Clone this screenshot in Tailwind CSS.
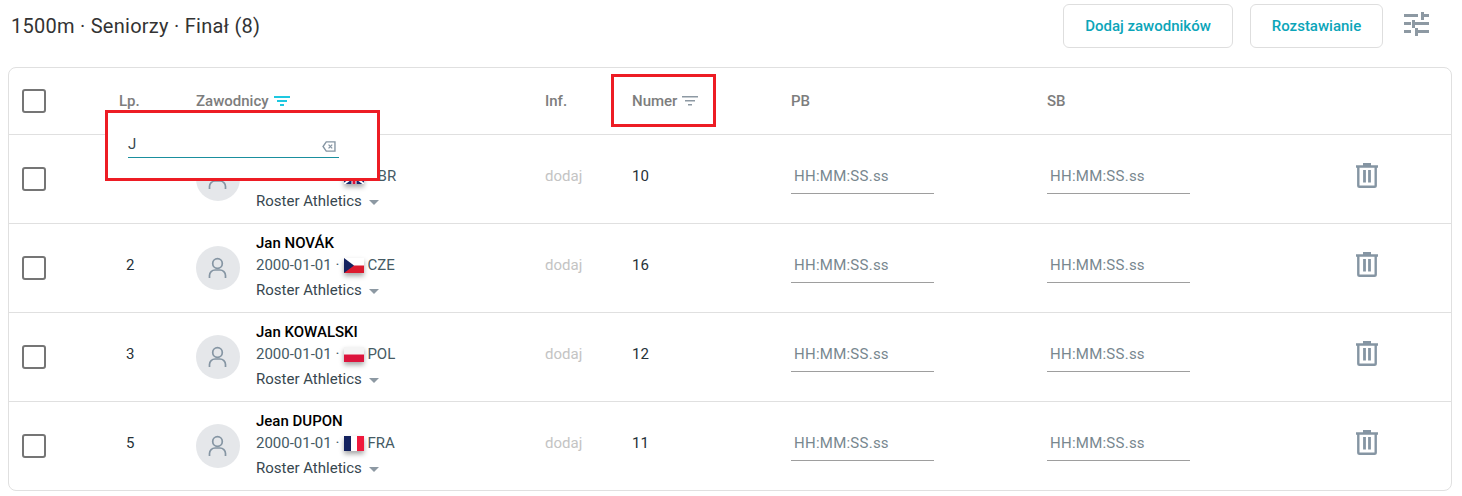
<!DOCTYPE html>
<html lang="pl">
<head>
  <meta charset="UTF-8">
  <title>1500m Seniorzy</title>
  <script src="https://cdn.jsdelivr.net/npm/@tailwindcss/browser@4"></script>
</head>
<body class="bg-white font-['Roboto',sans-serif] text-[15px] text-[#263238] w-[1462px] h-[496px] overflow-hidden relative">

  <!-- toolbar -->
  <div class="h-[67px] pl-[11px] pt-[4px] flex items-start">
    <h1 class="text-[20px] tracking-[0.26px] leading-[44px] text-[#333] flex-1">1500m · Seniorzy · Finał (8)</h1>
    <button class="h-[44px] w-[170px] border border-[#dedede] rounded-[6px] font-medium text-[#0ba5b9]">Dodaj zawodników</button>
    <button class="h-[44px] w-[133px] ml-[17px] border border-[#dedede] rounded-[6px] font-medium text-[#0ba5b9]">Rozstawianie</button>
    <svg class="ml-[21px] mr-[33px] mt-[8px]" width="25" height="24" viewBox="0 0 25 24" fill="#8d99a3">
      <rect x="0" y="2" width="14" height="3"/><rect x="17" y="0" width="3" height="8"/><rect x="17" y="2" width="8" height="3"/>
      <rect x="0" y="10" width="7" height="3"/><rect x="8" y="8" width="3" height="8"/><rect x="8" y="10" width="17" height="3"/>
      <rect x="0" y="18" width="7" height="3"/><rect x="11" y="16" width="3" height="8"/><rect x="11" y="18" width="14" height="3"/>
    </svg>
  </div>

  <!-- table -->
  <div class="mx-[8px] w-[1444px] h-[424px] border border-[#e0e0e0] rounded-[8px]">
    <div class="grid grid-cols-[97px_77px_349px_87px_159px_256px_308px_1fr] items-center pl-[13px] h-[67px] border-b border-[#e0e0e0] font-medium text-[#7d7d7d]">
      <span class="w-[24px] h-[24px] border-2 border-[#757575] rounded-[3px]"></span>
      <span>Lp.</span>
      <span class="flex items-center gap-[5px]">Zawodnicy
        <svg width="16" height="12" viewBox="0 0 16 12" fill="#1ec8e0"><rect y="1" width="16" height="2"/><rect x="3" y="5" width="10" height="2"/><rect x="6" y="9" width="4" height="2"/></svg>
      </span>
      <span>Inf.</span>
      <span class="flex items-center gap-[5px]">Numer
        <svg width="16" height="12" viewBox="0 0 16 12" fill="#8d99a3"><rect y="1" width="16" height="1.5"/><rect x="3" y="5" width="10" height="1.5"/><rect x="6" y="9" width="4" height="1.5"/></svg>
      </span>
      <span>PB</span>
      <span>SB</span>
      <span></span>
    </div>

    <!-- row 1 -->
    <div class="grid grid-cols-[97px_77px_349px_87px_159px_256px_308px_1fr] items-center pl-[13px] h-[89px] border-b border-[#e0e0e0]">
      <span class="w-[24px] h-[24px] border-2 border-[#757575] rounded-[3px]"></span>
      <span class="pl-[7px] mb-[6px]">1</span>
      <div class="flex items-center gap-[16px]">
        <span class="w-[44px] h-[44px] rounded-full bg-[#e5e7ea] flex items-center justify-center">
          <svg width="24" height="24" viewBox="0 0 24 24" fill="none" stroke="#8595a3" stroke-width="1.7"><circle cx="11.5" cy="7.5" r="4.800"/><path d="M3.500 22v-2.500c0-3 2.500-5.500 5.500-5.500h5c3 0 5.500 2.500 5.500 5.500V22"/></svg>
        </span>
        <div class="leading-[20px]">
          <div class="font-medium text-black h-[24px] pt-[2px]">John SMITH</div>
          <div class="flex items-center h-[20px] text-[#455a64]">2000-01-01 ·
            <svg class="ml-[5px] mr-[3px] shadow-[0_3px_5px_rgba(0,0,0,0.35)]" width="20" height="15" viewBox="0 0 20 15"><rect width="20" height="15" fill="#1a2a6c"/><path d="M0 0l20 15M20 0L0 15" stroke="#fff" stroke-width="2"/><path d="M10 0v15M0 7.500h20" stroke="#fff" stroke-width="5"/><path d="M10 0v15M0 7.500h20" stroke="#d8143a" stroke-width="3"/></svg>GBR</div>
          <div class="flex items-center h-[30px] text-[#37474f]">Roster Athletics<span class="ml-[7px] mt-[2px] w-0 h-0 border-x-[5px] border-x-transparent border-t-[5px] border-t-[#8d99a3]"></span></div>
        </div>
      </div>
      <span class="text-[#c4c4c4] mb-[6px]">dodaj</span>
      <span class="mb-[6px]">10</span>
      <span class="w-[143px] h-[30px] border-b border-[#9e9e9e] pl-[3px] leading-[24px] tracking-[0.25px] text-[#78878f]">HH:MM:SS.ss</span>
      <span class="w-[143px] h-[30px] border-b border-[#9e9e9e] pl-[3px] leading-[24px] tracking-[0.25px] text-[#78878f]">HH:MM:SS.ss</span>
      <svg class="mb-[6px]" width="24" height="26" viewBox="0 0 24 26" fill="none" stroke="#8595a3"><path d="M1 3.500h22M8 1.200h8" stroke-width="2.400"/><path d="M3.300 4v18.500c0 .8.500 1.300 1.300 1.300h14.800c.8 0 1.300-.5 1.300-1.300V4" stroke-width="2.400"/><path d="M9.500 7v12.500M14.500 7v12.500" stroke-width="2.800"/></svg>
    </div>

    <!-- row 2 -->
    <div class="grid grid-cols-[97px_77px_349px_87px_159px_256px_308px_1fr] items-center pl-[13px] h-[89px] border-b border-[#e0e0e0]">
      <span class="w-[24px] h-[24px] border-2 border-[#757575] rounded-[3px]"></span>
      <span class="pl-[7px] mb-[6px]">2</span>
      <div class="flex items-center gap-[16px]">
        <span class="w-[44px] h-[44px] rounded-full bg-[#e5e7ea] flex items-center justify-center">
          <svg width="24" height="24" viewBox="0 0 24 24" fill="none" stroke="#8595a3" stroke-width="1.7"><circle cx="11.5" cy="7.5" r="4.800"/><path d="M3.500 22v-2.500c0-3 2.500-5.500 5.500-5.500h5c3 0 5.500 2.500 5.500 5.500V22"/></svg>
        </span>
        <div class="leading-[20px]">
          <div class="font-medium text-black h-[24px] pt-[2px]">Jan NOVÁK</div>
          <div class="flex items-center h-[20px] text-[#455a64]">2000-01-01 ·
            <svg class="ml-[5px] mr-[3px] shadow-[0_3px_5px_rgba(0,0,0,0.35)]" width="20" height="15" viewBox="0 0 20 15"><rect width="20" height="7.500" fill="#fff"/><rect y="7.500" width="20" height="7.500" fill="#dc1a2e"/><path d="M0 0l10 7.500L0 15z" fill="#14225f"/></svg>CZE</div>
          <div class="flex items-center h-[30px] text-[#37474f]">Roster Athletics<span class="ml-[7px] mt-[2px] w-0 h-0 border-x-[5px] border-x-transparent border-t-[5px] border-t-[#8d99a3]"></span></div>
        </div>
      </div>
      <span class="text-[#c4c4c4] mb-[6px]">dodaj</span>
      <span class="mb-[6px]">16</span>
      <span class="w-[143px] h-[30px] border-b border-[#9e9e9e] pl-[3px] leading-[24px] tracking-[0.25px] text-[#78878f]">HH:MM:SS.ss</span>
      <span class="w-[143px] h-[30px] border-b border-[#9e9e9e] pl-[3px] leading-[24px] tracking-[0.25px] text-[#78878f]">HH:MM:SS.ss</span>
      <svg class="mb-[6px]" width="24" height="26" viewBox="0 0 24 26" fill="none" stroke="#8595a3"><path d="M1 3.500h22M8 1.200h8" stroke-width="2.400"/><path d="M3.300 4v18.500c0 .8.500 1.300 1.300 1.300h14.800c.8 0 1.300-.5 1.300-1.300V4" stroke-width="2.400"/><path d="M9.500 7v12.500M14.500 7v12.500" stroke-width="2.800"/></svg>
    </div>

    <!-- row 3 -->
    <div class="grid grid-cols-[97px_77px_349px_87px_159px_256px_308px_1fr] items-center pl-[13px] h-[89px] border-b border-[#e0e0e0]">
      <span class="w-[24px] h-[24px] border-2 border-[#757575] rounded-[3px]"></span>
      <span class="pl-[7px] mb-[6px]">3</span>
      <div class="flex items-center gap-[16px]">
        <span class="w-[44px] h-[44px] rounded-full bg-[#e5e7ea] flex items-center justify-center">
          <svg width="24" height="24" viewBox="0 0 24 24" fill="none" stroke="#8595a3" stroke-width="1.7"><circle cx="11.5" cy="7.5" r="4.800"/><path d="M3.500 22v-2.500c0-3 2.500-5.500 5.500-5.500h5c3 0 5.500 2.500 5.500 5.500V22"/></svg>
        </span>
        <div class="leading-[20px]">
          <div class="font-medium text-black h-[24px] pt-[2px]">Jan KOWALSKI</div>
          <div class="flex items-center h-[20px] text-[#455a64]">2000-01-01 ·
            <svg class="ml-[5px] mr-[3px] shadow-[0_3px_5px_rgba(0,0,0,0.35)]" width="20" height="15" viewBox="0 0 20 15"><rect width="20" height="7.500" fill="#f4f4f4"/><rect y="7.500" width="20" height="7.500" fill="#dc143c"/></svg>POL</div>
          <div class="flex items-center h-[30px] text-[#37474f]">Roster Athletics<span class="ml-[7px] mt-[2px] w-0 h-0 border-x-[5px] border-x-transparent border-t-[5px] border-t-[#8d99a3]"></span></div>
        </div>
      </div>
      <span class="text-[#c4c4c4] mb-[6px]">dodaj</span>
      <span class="mb-[6px]">12</span>
      <span class="w-[143px] h-[30px] border-b border-[#9e9e9e] pl-[3px] leading-[24px] tracking-[0.25px] text-[#78878f]">HH:MM:SS.ss</span>
      <span class="w-[143px] h-[30px] border-b border-[#9e9e9e] pl-[3px] leading-[24px] tracking-[0.25px] text-[#78878f]">HH:MM:SS.ss</span>
      <svg class="mb-[6px]" width="24" height="26" viewBox="0 0 24 26" fill="none" stroke="#8595a3"><path d="M1 3.500h22M8 1.200h8" stroke-width="2.400"/><path d="M3.300 4v18.500c0 .8.500 1.300 1.300 1.300h14.800c.8 0 1.300-.5 1.300-1.300V4" stroke-width="2.400"/><path d="M9.500 7v12.500M14.500 7v12.500" stroke-width="2.800"/></svg>
    </div>

    <!-- row 4 -->
    <div class="grid grid-cols-[97px_77px_349px_87px_159px_256px_308px_1fr] items-center pl-[13px] h-[89px] border-b border-transparent">
      <span class="w-[24px] h-[24px] border-2 border-[#757575] rounded-[3px]"></span>
      <span class="pl-[7px] mb-[6px]">5</span>
      <div class="flex items-center gap-[16px]">
        <span class="w-[44px] h-[44px] rounded-full bg-[#e5e7ea] flex items-center justify-center">
          <svg width="24" height="24" viewBox="0 0 24 24" fill="none" stroke="#8595a3" stroke-width="1.7"><circle cx="11.5" cy="7.5" r="4.800"/><path d="M3.500 22v-2.500c0-3 2.500-5.500 5.500-5.500h5c3 0 5.500 2.500 5.500 5.500V22"/></svg>
        </span>
        <div class="leading-[20px]">
          <div class="font-medium text-black h-[24px] pt-[2px]">Jean DUPON</div>
          <div class="flex items-center h-[20px] text-[#455a64]">2000-01-01 ·
            <svg class="ml-[5px] mr-[3px] shadow-[0_3px_5px_rgba(0,0,0,0.35)]" width="20" height="15" viewBox="0 0 20 15"><rect width="7" height="15" fill="#14225f"/><rect x="7" width="6" height="15" fill="#fff"/><rect x="13" width="7" height="15" fill="#f0193c"/></svg>FRA</div>
          <div class="flex items-center h-[30px] text-[#37474f]">Roster Athletics<span class="ml-[7px] mt-[2px] w-0 h-0 border-x-[5px] border-x-transparent border-t-[5px] border-t-[#8d99a3]"></span></div>
        </div>
      </div>
      <span class="text-[#c4c4c4] mb-[6px]">dodaj</span>
      <span class="mb-[6px]">11</span>
      <span class="w-[143px] h-[30px] border-b border-[#9e9e9e] pl-[3px] leading-[24px] tracking-[0.25px] text-[#78878f]">HH:MM:SS.ss</span>
      <span class="w-[143px] h-[30px] border-b border-[#9e9e9e] pl-[3px] leading-[24px] tracking-[0.25px] text-[#78878f]">HH:MM:SS.ss</span>
      <svg class="mb-[6px]" width="24" height="26" viewBox="0 0 24 26" fill="none" stroke="#8595a3"><path d="M1 3.500h22M8 1.200h8" stroke-width="2.400"/><path d="M3.300 4v18.500c0 .8.500 1.300 1.300 1.300h14.800c.8 0 1.300-.5 1.300-1.300V4" stroke-width="2.400"/><path d="M9.500 7v12.500M14.500 7v12.500" stroke-width="2.800"/></svg>
    </div>
  </div>

  <!-- red highlight: filter popup -->
  <div class="absolute left-[105px] top-[110px] w-[275px] h-[71px] bg-white border-[3px] border-[#ed1c24] pl-[20px] pr-[38px] pt-[18px]">
    <div class="flex items-center justify-between h-[27px] border-b border-[#1a8f9e]">
      <span class="text-[#37474f]">J</span>
      <svg class="mt-[4px] mr-[3px]" width="14" height="11" viewBox="0 0 15 12" fill="none" stroke="#8595a3" stroke-width="1.500"><path d="M4.500 1h9.500v10H4.500L1 6z"/><path d="M7 4l4 4M11 4l-4 4" stroke-width="1.400"/></svg>
    </div>
  </div>

  <!-- red highlight: Numer column -->
  <div class="absolute left-[611px] top-[74px] w-[105px] h-[53px] border-[3px] border-[#ed1c24]"></div>
</body>
</html>
